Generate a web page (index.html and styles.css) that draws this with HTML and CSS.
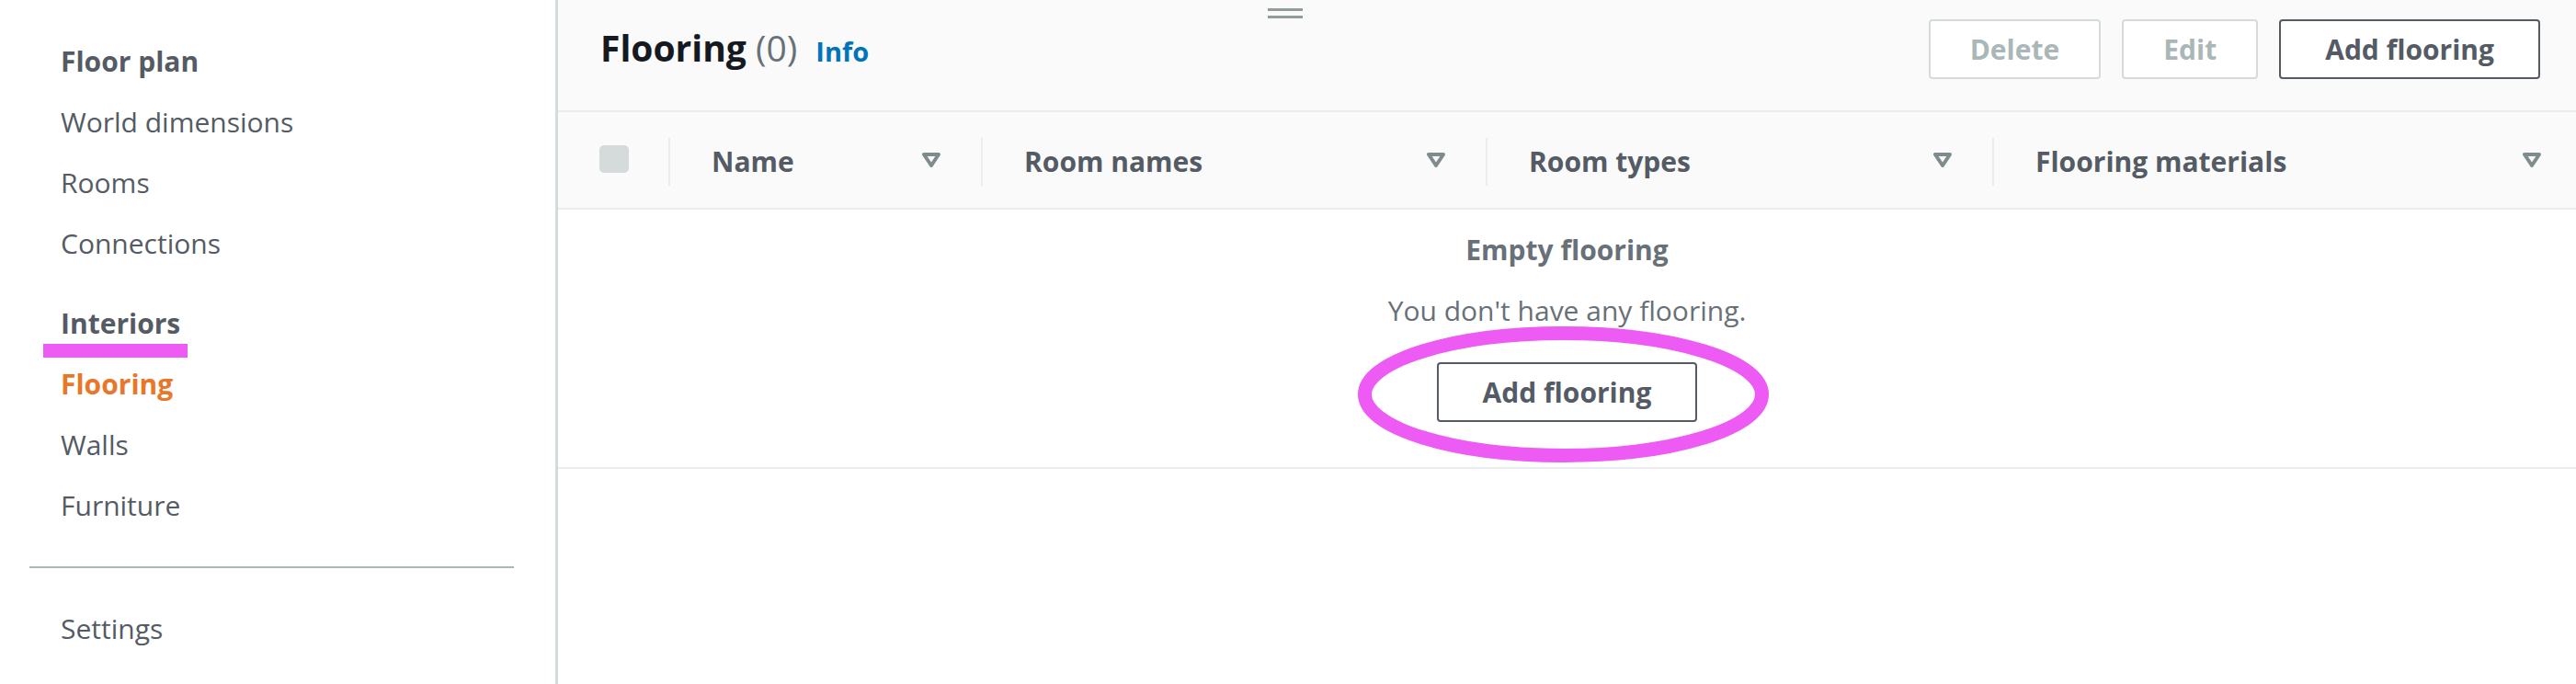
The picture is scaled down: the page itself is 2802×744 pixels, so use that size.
FILE: index.html
```html
<!DOCTYPE html>
<html lang="en">
<head>
<meta charset="utf-8">
<title>Flooring</title>
<link rel="stylesheet" href="styles.css">
</head>
<body>
<div class="app">
  <nav class="sidebar">
    <div class="nav-group">
      <div class="nav-item nav-head">Floor plan</div>
      <a class="nav-item" href="#">World dimensions</a>
      <a class="nav-item" href="#">Rooms</a>
      <a class="nav-item" href="#">Connections</a>
    </div>
    <div class="nav-group group-gap">
      <div class="nav-item nav-head annotated">Interiors<span class="mark-underline"></span></div>
      <a class="nav-item active" href="#">Flooring</a>
      <a class="nav-item" href="#">Walls</a>
      <a class="nav-item" href="#">Furniture</a>
    </div>
    <hr class="nav-divider">
    <a class="nav-item" href="#">Settings</a>
  </nav>

  <span class="drag-handle"></span>

  <main class="main">
    <header class="toolbar">
      <h2 class="title">Flooring <span class="count">(0)</span><a class="info" href="#">Info</a></h2>
      <div class="actions">
        <button class="btn disabled" type="button">Delete</button>
        <button class="btn disabled" type="button">Edit</button>
        <button class="btn btn-wide" type="button">Add flooring</button>
      </div>
    </header>

    <div class="thead">
      <div class="th-check"><span class="checkbox"></span></div>
      <div class="th col-name"><span>Name</span><svg class="sort" viewBox="0 0 20 16"><polygon points="2,2 18,2 10,14"/></svg></div>
      <div class="th col-rooms"><span>Room names</span><svg class="sort" viewBox="0 0 20 16"><polygon points="2,2 18,2 10,14"/></svg></div>
      <div class="th col-types"><span>Room types</span><svg class="sort" viewBox="0 0 20 16"><polygon points="2,2 18,2 10,14"/></svg></div>
      <div class="th col-materials"><span>Flooring materials</span><svg class="sort" viewBox="0 0 20 16"><polygon points="2,2 18,2 10,14"/></svg></div>
    </div>

    <div class="empty">
      <div class="empty-title">Empty flooring</div>
      <p class="empty-text">You don't have any flooring.</p>
      <div class="empty-actions">
        <button class="btn btn-wide" type="button">Add flooring</button>
      </div>
      <svg class="circle-mark" viewBox="0 0 447 148"><ellipse cx="223.5" cy="74" rx="216" ry="66.5"/></svg>
    </div>
  </main>
</div>
</body>
</html>
```

FILE: styles.css
```css
html, body {
  margin: 0;
  padding: 0;
  background: #ffffff;
}

body {
  font-family: "Open Sans", "Noto Sans", sans-serif;
  color: #545b64;
}

.app {
  position: relative;
  display: flex;
  min-height: 744px;
}

/* Sidebar */
.sidebar {
  flex: none;
  width: 604px;
  padding-top: 34px;
  border-right: 3px solid #d5dbdb;
}

.nav-item {
  display: block;
  padding-left: 66px;
  font-size: 30px;
  line-height: 66px;
  color: #545b64;
  text-decoration: none;
  white-space: nowrap;
}

.nav-head {
  font-weight: 700;
}

.group-gap {
  margin-top: 21px;
}

.nav-item.active {
  color: #e8772a;
  font-weight: 700;
}

.annotated {
  position: relative;
}

.mark-underline {
  position: absolute;
  left: 47px;
  top: 55px;
  width: 157px;
  height: 15px;
  background: #ed5af4;
}

.nav-divider {
  height: 2px;
  margin: 33px 45px 33px 32px;
  border: 0;
  background: #aab7b8;
}

/* Drag handle */
.drag-handle {
  position: absolute;
  top: 9px;
  left: calc(50% - 22px);
  width: 38px;
  height: 5px;
  border-top: 3px solid #939c9d;
  border-bottom: 3px solid #939c9d;
}

/* Main */
.main {
  flex: 1;
  min-width: 0;
}

.toolbar {
  display: flex;
  justify-content: space-between;
  align-items: flex-start;
  height: 122px;
  box-sizing: border-box;
  padding: 21px 39px 0 46px;
  background: #fafafa;
  border-bottom: 2px solid #eaeded;
}

.title {
  margin: 0;
  font-size: 39px;
  line-height: 62px;
  font-weight: 700;
  color: #16191f;
  white-space: nowrap;
}

.count {
  font-weight: 400;
  color: #687078;
}

.info {
  margin-left: 20px;
  font-size: 29px;
  font-weight: 700;
  color: #0073bb;
  text-decoration: none;
}

.actions {
  display: flex;
  gap: 23px;
}

.btn {
  display: inline-flex;
  align-items: center;
  height: 65px;
  box-sizing: border-box;
  padding: 0 43px;
  border: 2px solid #545b64;
  border-radius: 4px;
  background: #ffffff;
  font-family: "Open Sans", "Noto Sans", sans-serif;
  font-size: 30px;
  font-weight: 700;
  color: #545b64;
  white-space: nowrap;
}

.btn-wide {
  padding: 0 48px;
}

.btn.disabled {
  border-color: #d5dbdb;
  color: #aab7b8;
}

/* Table header */
.thead {
  display: flex;
  align-items: center;
  height: 106px;
  box-sizing: border-box;
  padding-top: 4px;
  background: #fafafa;
  border-bottom: 2px solid #eaeded;
}

.th-check {
  flex: none;
  width: 120px;
  height: 52px;
  box-sizing: border-box;
  padding: 8px 0 0 45px;
}

.checkbox {
  display: block;
  width: 32px;
  height: 30px;
  border-radius: 5px;
  background: #d5dbdb;
}

.th {
  flex: none;
  display: flex;
  align-items: center;
  justify-content: space-between;
  height: 52px;
  box-sizing: border-box;
  padding: 0 44px 0 45px;
  border-left: 2px solid #eaeded;
  font-size: 30px;
  line-height: 52px;
  font-weight: 700;
  color: #545b64;
  white-space: nowrap;
}

.col-name { width: 340px; }
.col-rooms { width: 549px; }
.col-types { width: 551px; }
.col-materials { flex: 1; padding-right: 38px; }

.sort {
  width: 20px;
  height: 16px;
  flex: none;
  margin-top: -4px;
}

.sort polygon {
  fill: none;
  stroke: #7f8c8d;
  stroke-width: 4;
  stroke-linejoin: round;
}

/* Empty state */
.empty {
  position: relative;
  padding: 24px 0 49px;
  text-align: center;
  border-bottom: 2px solid #eaeded;
}

.empty-title {
  font-size: 30px;
  line-height: 40px;
  font-weight: 700;
  color: #687078;
}

.empty-text {
  margin: 26px 0 0;
  font-size: 30px;
  line-height: 40px;
  color: #687078;
}

.empty-actions {
  display: flex;
  justify-content: center;
  margin-top: 36px;
}

.circle-mark {
  position: absolute;
  top: 127px;
  left: 50%;
  width: 447px;
  height: 148px;
  margin-left: -227.5px;
  pointer-events: none;
}

.circle-mark ellipse {
  fill: none;
  stroke: #ed5af4;
  stroke-width: 15;
}
```
